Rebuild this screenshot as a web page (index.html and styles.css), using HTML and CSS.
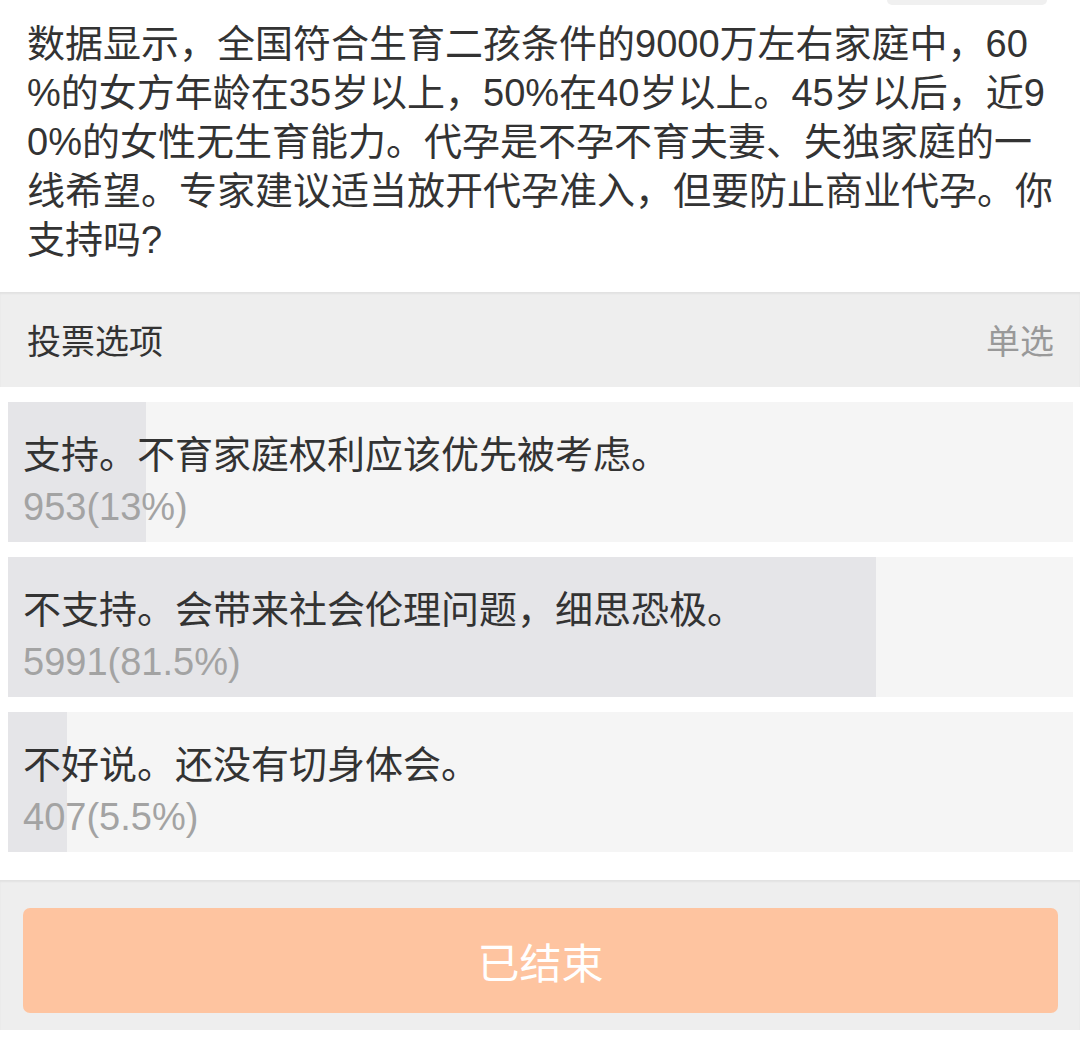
FILE: index.html
```html
<!DOCTYPE html>
<html lang="zh-CN">
<head>
<meta charset="utf-8">
<title>投票</title>
<link rel="stylesheet" href="styles.css">
</head>
<body>
<div class="page">
  <div class="top-tab"></div>
  <p class="question">数据显示，全国符合生育二孩条件的9000万左右家庭中，60<br>%的女方年龄在35岁以上，50%在40岁以上。45岁以后，近9<br>0%的女性无生育能力。代孕是不孕不育夫妻、失独家庭的一<br>线希望。专家建议适当放开代孕准入，但要防止商业代孕。你<br>支持吗?</p>
  <div class="vote-head">
    <span class="vote-title">投票选项</span>
    <span class="vote-mode">单选</span>
  </div>
  <div class="options">
    <div class="option">
      <div class="fill" style="width:13%"></div>
      <div class="option-text">支持。不育家庭权利应该优先被考虑。</div>
      <div class="option-count">953(13%)</div>
    </div>
    <div class="option">
      <div class="fill" style="width:81.5%"></div>
      <div class="option-text">不支持。会带来社会伦理问题，细思恐极。</div>
      <div class="option-count">5991(81.5%)</div>
    </div>
    <div class="option">
      <div class="fill" style="width:5.5%"></div>
      <div class="option-text">不好说。还没有切身体会。</div>
      <div class="option-count">407(5.5%)</div>
    </div>
  </div>
  <div class="footer">
    <div class="ended-btn">已结束</div>
  </div>
</div>
</body>
</html>
```
FILE: styles.css
```css
html, body {
  margin: 0;
  padding: 0;
  background: #ffffff;
}
body {
  font-family: "Liberation Sans", "Noto Sans CJK SC", sans-serif;
  color: #333333;
}
.page {
  width: 1080px;
  height: 1037px;
  overflow: hidden;
  display: flex;
  flex-direction: column;
}
.top-tab {
  margin-left: 887px;
  width: 160px;
  height: 5px;
  background: #f0f0f0;
  border-radius: 0 0 10px 10px;
}
.question {
  margin: 0;
  padding: 15px 20px 27px 27px;
  font-size: 38px;
  line-height: 49px;
  white-space: nowrap;
  color: #333333;
}
.vote-head {
  height: 95px;
  background: #eeeeee;
  box-shadow: inset 0 2px 2px rgba(0, 0, 0, 0.05);
  display: flex;
  align-items: center;
  justify-content: space-between;
  padding: 0 26px 0 27px;
  font-size: 34px;
}
.vote-title {
  color: #333333;
}
.vote-mode {
  color: #999999;
}
.options {
  display: flex;
  flex-direction: column;
  gap: 15px;
  padding: 15px 7px 28px 8px;
}
.option {
  position: relative;
  height: 140px;
  box-sizing: border-box;
  background: #f5f5f5;
  padding: 27px 15px 0 15px;
  font-size: 38px;
  line-height: 52px;
}
.fill {
  position: absolute;
  left: 0;
  top: 0;
  bottom: 0;
  background: #e5e5e8;
}
.option-text,
.option-count {
  position: relative;
  white-space: nowrap;
}
.option-text {
  color: #333333;
}
.option-count {
  color: #a3a3a3;
}
.footer {
  height: 150px;
  box-sizing: border-box;
  background: #eeeeee;
  box-shadow: inset 0 2px 2px rgba(0, 0, 0, 0.05);
  padding: 28px 22px 0 23px;
}
.ended-btn {
  height: 105px;
  border-radius: 7px;
  background: #fec4a0;
  color: #ffffff;
  font-size: 42px;
  display: flex;
  align-items: center;
  justify-content: center;
}
```
